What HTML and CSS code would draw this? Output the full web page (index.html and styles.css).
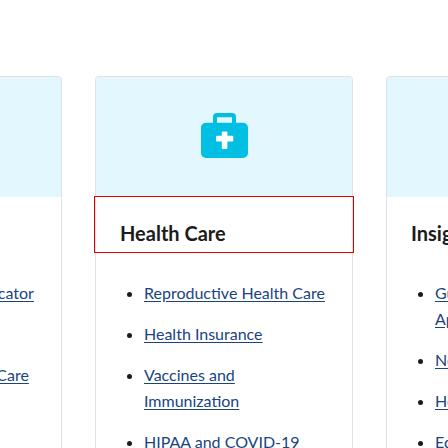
FILE: index.html
```html
<!DOCTYPE html>
<html lang="en">
<head>
<meta charset="utf-8">
<title>Health Care</title>
<link rel="stylesheet" href="styles.css">
</head>
<body>
<div class="cards">
  <div class="card">
    <div class="card-media"></div>
    <div class="card-header"><h3 class="card-title">Find Health Care</h3></div>
    <ul class="card-list">
      <li><a href="#">Treatment Facility Locator</a></li>
      <li><a href="#">Medicaid</a></li>
      <li><a href="#">Community Primary Care</a></li>
    </ul>
  </div>
  <div class="card">
    <div class="card-media">
      <svg class="kit" width="47" height="45" viewBox="0 0 47 45" aria-hidden="true">
        <path fill="#00bfe3" fill-rule="evenodd" d="M16 0h15a4 4 0 0 1 4 4v7h-4V4.3H16V11h-4V4a4 4 0 0 1 4-4z"/>
        <rect x="0" y="9.7" width="47" height="35.3" rx="5" fill="#00bfe3"/>
        <rect x="20.8" y="18.5" width="5.6" height="17.5" rx="1" fill="#ffffff"/>
        <rect x="15" y="22.8" width="17.3" height="5.8" rx="1" fill="#ffffff"/>
      </svg>
    </div>
    <div class="card-header is-focused"><h3 class="card-title">Health Care</h3></div>
    <ul class="card-list">
      <li><a href="#">Reproductive Health Care</a></li>
      <li><a href="#">Health Insurance</a></li>
      <li><a href="#">Vaccines and Immunization</a></li>
      <li><a href="#">HIPAA and COVID-19</a></li>
    </ul>
  </div>
  <div class="card">
    <div class="card-media"></div>
    <div class="card-header"><h3 class="card-title">Insights</h3></div>
    <ul class="card-list">
      <li><a href="#">Guidance for Grant Applications</a></li>
      <li><a href="#">News</a></li>
      <li><a href="#">Health Data</a></li>
      <li><a href="#">Education</a></li>
    </ul>
  </div>
</div>
</body>
</html>
```
FILE: styles.css
```css
html, body {
  margin: 0;
  padding: 0;
  background: #ffffff;
  overflow: hidden;
}

body {
  font-family: Lato, "Open Sans", "Noto Sans", sans-serif;
  color: #1b1b1b;
  width: 448px;
  height: 448px;
}

.cards {
  display: flex;
  justify-content: center;
  gap: 33px;
  padding-top: 76px;
}

.card {
  flex: 0 0 258px;
  width: 258px;
  box-sizing: border-box;
  border: 1px solid #dfe1e2;
  border-radius: 4px;
  background: #ffffff;
  min-height: 500px;
}

.card-media {
  height: 120px;
  background: #e2f8fe;
  border-radius: 3px 3px 0 0;
  display: flex;
  align-items: center;
  justify-content: center;
}

.kit {
  display: block;
  margin-top: -4px;
}

.card-header {
  height: 55px;
  box-sizing: border-box;
  padding: 24px 24px 0 24px;
}

.card-header.is-focused {
  outline: 1px solid #e00000;
  margin: 0 -1px 0 -1px;
  padding-left: 25px;
}

.card-title {
  margin: 0;
  font-size: 20px;
  line-height: 24px;
  font-weight: 700;
  color: #1b1b1b;
}

.card-list {
  margin: 0;
  padding: 28px 24px 0 48px;
  list-style: disc;
}

.card-list li {
  font-size: 16px;
  line-height: 26px;
  margin-bottom: 15px;
}

.card-list a {
  color: #1a4480;
  text-decoration: underline;
  text-underline-offset: 2px;
}
```
